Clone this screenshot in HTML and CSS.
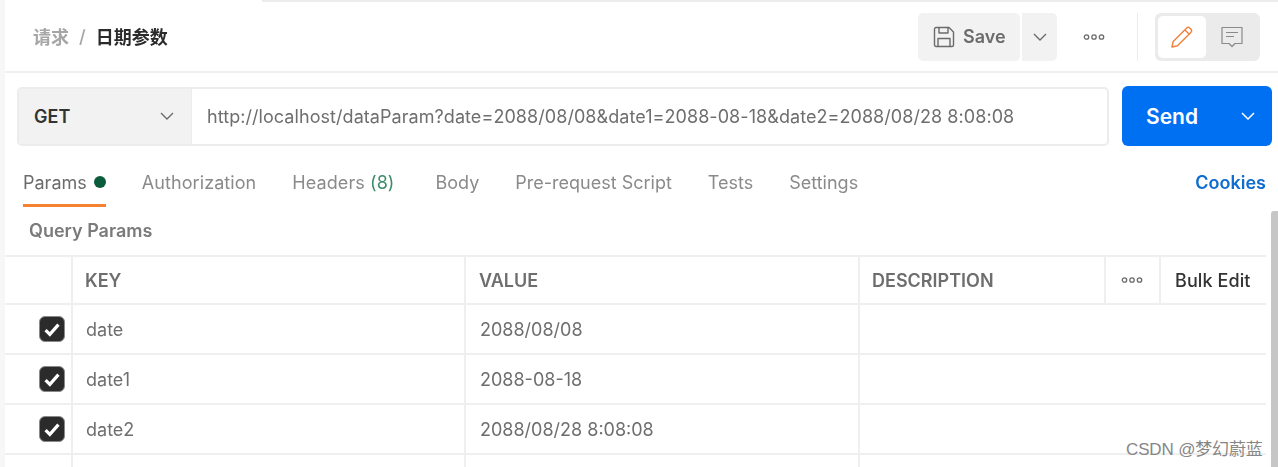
FILE: index.html
```html
<!DOCTYPE html>
<html lang="zh">
<head>
<meta charset="utf-8">
<title>日期参数</title>
<link rel="stylesheet" href="styles.css">
</head>
<body>
<div class="app">
  <div class="topline"><span class="topline-gap"></span><span class="topline-bar"></span></div>
  <header class="header">
    <div class="crumbs"><span class="crumb-parent">请求</span><span class="crumb-sep">/</span><span class="crumb-current">日期参数</span></div>
    <div class="actions">
      <div class="save">
        <svg class="save-icon" viewBox="0 0 22 22" fill="none" stroke="#6b6b6b" stroke-width="1.4" stroke-linejoin="round"><path d="M1.5 3a1.5 1.5 0 0 1 1.5-1.5h13l4.500 4.500v13a1.500 1.500 0 0 1-1.500 1.500h-16a1.500 1.500 0 0 1-1.500-1.500z"/><path d="M6 1.500v5.500h9v-5.500"/><path d="M5 20.500v-8h12v8"/></svg>
        <span>Save</span>
      </div>
      <div class="save-more"><svg class="chev" viewBox="0 0 14 8" fill="none" stroke="#6b6b6b" stroke-width="1.400"><path d="M1 1l6 6 6-6"/></svg></div>
      <svg class="dots" viewBox="0 0 22 6" fill="none" stroke="#6b6b6b" stroke-width="1.300"><circle cx="3.500" cy="3" r="2.200"/><circle cx="11" cy="3" r="2.200"/><circle cx="18.500" cy="3" r="2.200"/></svg>
      <span class="vsep"></span>
      <div class="toggle">
        <span class="toggle-on"><svg class="pencil" viewBox="0 0 22 22" fill="none" stroke="#f0803c" stroke-width="1.400" stroke-linejoin="round"><path d="M1 21l1.200-5.500L15.500 2.200a2.500 2.500 0 0 1 3.500 0l.8.800a2.500 2.500 0 0 1 0 3.500L6.500 19.800z"/><path d="M14 4l4 4"/></svg></span>
        <span class="toggle-off"><svg class="comment" viewBox="0 0 22 22" fill="none" stroke="#8a8a8a" stroke-width="1.200" stroke-linejoin="round"><path d="M1 1.500h20v16h-7l-3 3-3-3h-7z"/><path d="M5 6.500h12M5 10.500h8"/></svg></span>
      </div>
    </div>
  </header>
  <div class="urlrow">
    <div class="urlbox">
      <div class="method"><span>GET</span><svg class="chev" viewBox="0 0 14 8" fill="none" stroke="#6b6b6b" stroke-width="1.400"><path d="M1 1l6 6 6-6"/></svg></div>
      <div class="url">http://localhost/dataParam?date=2088/08/08&amp;date1=2088-08-18&amp;date2=2088/08/28 8:08:08</div>
    </div>
    <div class="send"><span class="send-label">Send</span><svg class="chev" viewBox="0 0 14 8" fill="none" stroke="#ffffff" stroke-width="1.500"><path d="M1 1l6 6 6-6"/></svg></div>
  </div>
  <nav class="tabs">
    <span class="tab tab-active">Params<i class="dot"></i></span>
    <span class="tab tab-auth">Authorization</span>
    <span class="tab tab-headers">Headers <em class="count">(8)</em></span>
    <span class="tab tab-body">Body</span>
    <span class="tab tab-pre">Pre-request Script</span>
    <span class="tab tab-tests">Tests</span>
    <span class="tab">Settings</span>
    <span class="cookies">Cookies</span>
  </nav>
  <div class="section-title">Query Params</div>
  <div class="table">
    <div class="row row-head">
      <div class="cell c-check"></div>
      <div class="cell c-key">KEY</div>
      <div class="cell c-value">VALUE</div>
      <div class="cell c-desc">DESCRIPTION</div>
      <div class="cell c-more"><svg class="dots" viewBox="0 0 22 6" fill="none" stroke="#6b6b6b" stroke-width="1.300"><circle cx="3.500" cy="3" r="2.200"/><circle cx="11" cy="3" r="2.200"/><circle cx="18.500" cy="3" r="2.200"/></svg></div>
      <div class="cell c-bulk">Bulk Edit</div>
    </div>
    <div class="row">
      <div class="cell c-check"><span class="check"><svg viewBox="0 0 16 14" fill="none" stroke="#fff" stroke-width="3"><path d="M2 7.500l4 4 8-9"/></svg></span></div>
      <div class="cell c-key data">date</div>
      <div class="cell c-value data">2088/08/08</div>
      <div class="cell c-last"></div>
    </div>
    <div class="row">
      <div class="cell c-check"><span class="check"><svg viewBox="0 0 16 14" fill="none" stroke="#fff" stroke-width="3"><path d="M2 7.500l4 4 8-9"/></svg></span></div>
      <div class="cell c-key data">date1</div>
      <div class="cell c-value data">2088-08-18</div>
      <div class="cell c-last"></div>
    </div>
    <div class="row">
      <div class="cell c-check"><span class="check"><svg viewBox="0 0 16 14" fill="none" stroke="#fff" stroke-width="3"><path d="M2 7.500l4 4 8-9"/></svg></span></div>
      <div class="cell c-key data">date2</div>
      <div class="cell c-value data">2088/08/28 8:08:08</div>
      <div class="cell c-last"></div>
    </div>
    <div class="row row-end">
      <div class="cell c-check"></div>
      <div class="cell c-key"></div>
      <div class="cell c-value"></div>
      <div class="cell c-last"></div>
    </div>
  </div>
  <div class="scrollbar"></div>
  <div class="watermark">CSDN @梦幻蔚蓝</div>
</div>
</body>
</html>
```
FILE: styles.css
```css
* { box-sizing: border-box; }
html, body { margin: 0; padding: 0; }
body {
  width: 1278px;
  height: 467px;
  overflow: hidden;
  background: #fff;
  font-family: Inter, "Noto Sans CJK SC", "Liberation Sans", sans-serif;
  color: #6b6b6b;
}
.app {
  position: relative;
  width: 1278px;
  height: 467px;
  overflow: hidden;
  border-left: 5px solid #f7f7f7;
}
.topline, .header, .urlrow, .tabs, .section-title, .table { filter: blur(0.35px); }
.topline { display: flex; height: 2px; }
.topline-gap { width: 257px; }
.topline-bar { flex: 1; background: #ededed; }

.header {
  height: 71px;
  display: flex;
  align-items: center;
  justify-content: space-between;
  border-bottom: 2px solid #f0f0f0;
  padding: 0 18px 0 28px;
}
.crumbs { display: flex; align-items: center; font-size: 18px; font-weight: 700; margin-top: -1px; }
.crumb-parent { color: #a6a6a6; }
.crumb-sep { color: #a6a6a6; margin: 0 10px 0 10px; font-weight: 500; }
.crumb-current { color: #2b2b2b; }
.actions { display: flex; align-items: center; }
.save {
  width: 102px;
  height: 48px;
  background: #f2f2f2;
  border-radius: 5px;
  display: flex;
  align-items: center;
  gap: 8px;
  padding-left: 15px;
  font-size: 18px;
  font-weight: 600;
  color: #6b6b6b;
}
.save-icon { width: 22px; height: 22px; }
.save-more {
  width: 35px;
  height: 48px;
  margin-left: 2px;
  background: #f2f2f2;
  border-radius: 0 5px 5px 0;
  display: flex;
  align-items: center;
  justify-content: center;
}
.chev { width: 14px; height: 8px; display: block; }
.dots { width: 22px; height: 6px; display: block; }
.actions > .dots { margin-left: 26px; }
.vsep { width: 1px; height: 48px; background: #ececec; margin-left: 32px; }
.toggle {
  width: 105px;
  height: 48px;
  margin-left: 17px;
  background: #ebebeb;
  border-radius: 6px;
  padding: 3px;
  display: flex;
}
.toggle-on {
  width: 48px;
  height: 42px;
  background: #fff;
  border-radius: 5px;
  display: flex;
  align-items: center;
  justify-content: center;
}
.toggle-off { flex: 1; display: flex; align-items: center; justify-content: center; }
.pencil { width: 22px; height: 22px; }
.comment { width: 22px; height: 22px; }

.urlrow {
  display: flex;
  align-items: center;
  gap: 13px;
  height: 60px;
  margin-top: 13px;
  padding-left: 12px;
  padding-right: 6px;
}
.urlbox {
  width: 1092px;
  height: 59px;
  display: flex;
  border: 2px solid #ececec;
  border-radius: 5px;
  overflow: hidden;
}
.method {
  width: 173px;
  background: #f2f2f2;
  display: flex;
  align-items: center;
  justify-content: space-between;
  padding: 0 17px 0 15px;
  font-size: 18px;
  font-weight: 600;
  color: #333;
  border-right: 1px solid #ececec;
}
.url {
  flex: 1;
  display: flex;
  align-items: center;
  padding-left: 15px;
  font-size: 18px;
  letter-spacing: 0.06px;
  color: #6e6e6e;
  white-space: nowrap;
}
.send {
  width: 150px;
  height: 60px;
  background: #0070f3;
  border-radius: 6px;
  display: flex;
  align-items: center;
  justify-content: space-between;
  padding: 0 17px 0 24px;
  color: #fff;
  font-size: 21px;
  font-weight: 600;
}

.tabs {
  position: relative;
  display: flex;
  align-items: center;
  height: 55px;
  margin-top: 6px;
  padding-left: 18px;
  font-size: 18px;
  color: #8a8a8a;
}
.tab { display: flex; align-items: center; height: 55px; padding-top: 5px; margin-right: 36px; white-space: pre; }
.tab-auth, .tab-headers { letter-spacing: 0.08px; }
.tab-active { color: #6b6b6b; position: relative; }
.tab-active::after {
  content: "";
  position: absolute;
  left: 0;
  right: 0;
  bottom: 0;
  height: 3px;
  background: #f58233;
}
.dot { width: 12px; height: 12px; border-radius: 50%; background: #0b5c3c; margin-left: 7px; }
.count { font-style: normal; color: #3c8c6c; }
.tab-headers { margin-right: 41px; }
.cookies { margin-left: auto; margin-right: 12px; padding-top: 5px; color: #0f6cd0; font-weight: 600; }

.section-title {
  height: 48px;
  padding: 13px 0 0 24px;
  font-size: 18px;
  font-weight: 600;
  color: #7a7a7a;
}
.table { width: 1261px; border-top: 2px solid #efefef; }
.row { display: flex; height: 50px; border-bottom: 2px solid #efefef; }
.row-head { height: 48px; }
.cell {
  display: flex;
  align-items: center;
  border-right: 2px solid #efefef;
  font-size: 18px;
  white-space: nowrap;
}
.c-check { width: 68px; padding-left: 34px; }
.c-key { width: 393px; padding-left: 12px; }
.c-value { width: 394px; padding-left: 13px; }
.c-desc { width: 246px; padding-left: 12px; }
.c-more { width: 55px; justify-content: center; padding-right: 2px; }
.c-bulk { flex: 1; padding-left: 14px; border-right: 0; color: #333; font-weight: 500; letter-spacing: 0.1px; }
.c-last { flex: 1; border-right: 0; }
.row-head .c-key, .row-head .c-value, .row-head .c-desc { font-weight: 600; color: #6e6e6e; }
.c-key.data { color: #6e6e6e; padding-left: 13px; }
.c-value.data { color: #6e6e6e; padding-left: 14px; }
.row-end { border-bottom: 0; }
.check {
  width: 26px;
  height: 26px;
  flex: none;
  background: #2b2b2b;
  border: 1px solid #8a8a8a;
  border-radius: 6px;
  display: flex;
  align-items: center;
  justify-content: center;
}
.check svg { width: 18px; height: 15px; }

.scrollbar {
  position: absolute;
  right: 0;
  top: 211px;
  bottom: 0;
  width: 7px;
  background: #c6c6c6;
  border-radius: 3px 0 0 0;
}
.watermark {
  position: absolute;
  left: 1121px;
  top: 435px;
  font-family: "Liberation Sans", "Noto Sans CJK SC", sans-serif;
  font-size: 17px;
  letter-spacing: -0.15px;
  color: #868686;
  white-space: nowrap;
}
```
